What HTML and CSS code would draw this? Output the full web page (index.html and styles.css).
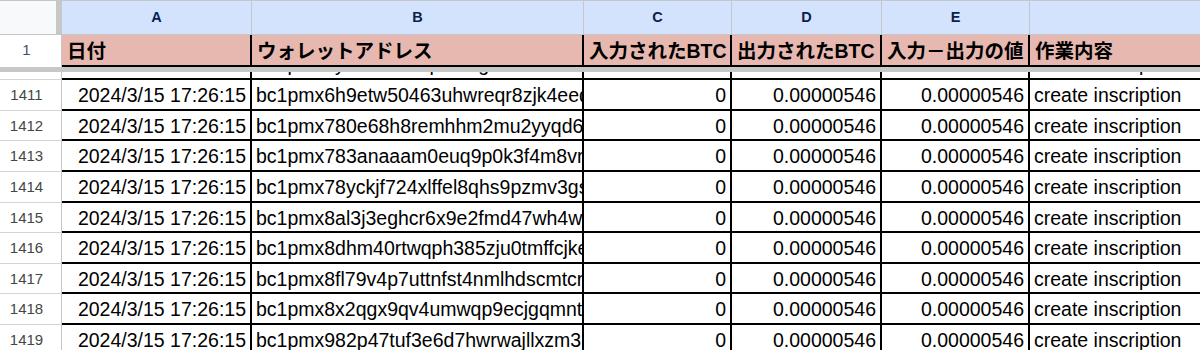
FILE: index.html
```html
<!DOCTYPE html>
<html lang="ja">
<head>
<meta charset="utf-8">
<title>Sheet</title>
<link rel="stylesheet" href="styles.css">
</head>
<body>
<div class="sheet">
  <div class="grid colheads">
    <div class="corner"></div>
    <div class="colhead">A</div>
    <div class="colhead">B</div>
    <div class="colhead">C</div>
    <div class="colhead">D</div>
    <div class="colhead">E</div>
    <div class="colhead"></div>
  </div>
  <div class="grid hdr-row">
    <div class="rn rn-sel">1</div>
    <div class="hcell">日付</div>
    <div class="hcell">ウォレットアドレス</div>
    <div class="hcell">入力されたBTC</div>
    <div class="hcell">出力されたBTC</div>
    <div class="hcell">入力－出力の値</div>
    <div class="hcell">作業内容</div>
  </div>
  <div class="freeze"></div>
  <div class="viewport">
    <div class="rows">
      <div class="grid drow">
        <div class="rn">1410</div>
        <div class="cell num">2024/3/15 17:26:15</div>
        <div class="cell">bc1pmx6yh9etw50ap3urkg8zt4eed0mrt</div>
        <div class="cell num">0</div>
        <div class="cell num">0.00000546</div>
        <div class="cell num">0.00000546</div>
        <div class="cell">create inscription</div>
      </div>
      <div class="grid drow">
        <div class="rn">1411</div>
        <div class="cell num">2024/3/15 17:26:15</div>
        <div class="cell">bc1pmx6h9etw50463uhwreqr8zjk4eeq9xl2</div>
        <div class="cell num">0</div>
        <div class="cell num">0.00000546</div>
        <div class="cell num">0.00000546</div>
        <div class="cell">create inscription</div>
      </div>
      <div class="grid drow">
        <div class="rn">1412</div>
        <div class="cell num">2024/3/15 17:26:15</div>
        <div class="cell">bc1pmx780e68h8remhhm2mu2yyqd6z7k0</div>
        <div class="cell num">0</div>
        <div class="cell num">0.00000546</div>
        <div class="cell num">0.00000546</div>
        <div class="cell">create inscription</div>
      </div>
      <div class="grid drow">
        <div class="rn">1413</div>
        <div class="cell num">2024/3/15 17:26:15</div>
        <div class="cell">bc1pmx783anaaam0euq9p0k3f4m8vrx2d</div>
        <div class="cell num">0</div>
        <div class="cell num">0.00000546</div>
        <div class="cell num">0.00000546</div>
        <div class="cell">create inscription</div>
      </div>
      <div class="grid drow">
        <div class="rn">1414</div>
        <div class="cell num">2024/3/15 17:26:15</div>
        <div class="cell">bc1pmx78yckjf724xlffel8qhs9pzmv3gs2</div>
        <div class="cell num">0</div>
        <div class="cell num">0.00000546</div>
        <div class="cell num">0.00000546</div>
        <div class="cell">create inscription</div>
      </div>
      <div class="grid drow">
        <div class="rn">1415</div>
        <div class="cell num">2024/3/15 17:26:15</div>
        <div class="cell">bc1pmx8al3j3eghcr6x9e2fmd47wh4wk3s</div>
        <div class="cell num">0</div>
        <div class="cell num">0.00000546</div>
        <div class="cell num">0.00000546</div>
        <div class="cell">create inscription</div>
      </div>
      <div class="grid drow">
        <div class="rn">1416</div>
        <div class="cell num">2024/3/15 17:26:15</div>
        <div class="cell">bc1pmx8dhm40rtwqph385zju0tmffcjke4q</div>
        <div class="cell num">0</div>
        <div class="cell num">0.00000546</div>
        <div class="cell num">0.00000546</div>
        <div class="cell">create inscription</div>
      </div>
      <div class="grid drow">
        <div class="rn">1417</div>
        <div class="cell num">2024/3/15 17:26:15</div>
        <div class="cell">bc1pmx8fl79v4p7uttnfst4nmlhdscmtcrx</div>
        <div class="cell num">0</div>
        <div class="cell num">0.00000546</div>
        <div class="cell num">0.00000546</div>
        <div class="cell">create inscription</div>
      </div>
      <div class="grid drow">
        <div class="rn">1418</div>
        <div class="cell num">2024/3/15 17:26:15</div>
        <div class="cell">bc1pmx8x2qgx9qv4umwqp9ecjgqmntw5z</div>
        <div class="cell num">0</div>
        <div class="cell num">0.00000546</div>
        <div class="cell num">0.00000546</div>
        <div class="cell">create inscription</div>
      </div>
      <div class="grid drow">
        <div class="rn">1419</div>
        <div class="cell num">2024/3/15 17:26:15</div>
        <div class="cell">bc1pmx982p47tuf3e6d7hwrwajllxzm3k8</div>
        <div class="cell num">0</div>
        <div class="cell num">0.00000546</div>
        <div class="cell num">0.00000546</div>
        <div class="cell">create inscription</div>
      </div>
    </div>
  </div>
</div>
</body>
</html>
```

FILE: styles.css
```css
* {
  box-sizing: border-box;
}

html,
body {
  margin: 0;
  padding: 0;
}

body {
  width: 1200px;
  height: 350px;
  overflow: hidden;
  background: #ffffff;
  font-family: "Liberation Sans", Arial, "Noto Sans CJK JP", sans-serif;
  color: #000000;
}

.sheet {
  display: flex;
  flex-direction: column;
  width: 1200px;
  height: 350px;
  overflow: hidden;
}

.grid {
  display: grid;
  grid-template-columns: 62px 190px 332px 148px 150px 148px 200px;
  flex: none;
}

/* column letters */
.colheads {
  height: 35px;
  border-top: 1px solid #c4c7c5;
  border-bottom: 1px solid #c4c7c5;
}

.corner {
  background: #f8f9fa;
  border-right: 6px solid #c7c7c7;
}

.colhead {
  background: #d3e3fd;
  border-right: 1px solid #c4c7c5;
  text-align: center;
  font-family: "Liberation Sans", Arial, sans-serif;
  font-weight: bold;
  font-size: 14.5px;
  line-height: 33px;
  color: #0a1f4d;
}

/* row numbers */
.rn {
  border-right: 1px solid #c4c7c5;
  border-bottom: 1px solid #d3d5d6;
  text-align: center;
  padding-right: 8px;
  font-family: "Liberation Sans", Arial, sans-serif;
  font-size: 15px;
  color: #444746;
  background: #ffffff;
}

.rn-sel {
  color: #3f506e;
}

/* header row 1 */
.hdr-row {
  height: 32px;
}

.hdr-row .rn {
  border-bottom: none;
  line-height: 30px;
}

.hcell {
  background: #e6b8af;
  border-right: 2px solid #000000;
  border-bottom: 2px solid #000000;
  font-weight: bold;
  font-size: 19.5px;
  line-height: 28px;
  padding: 2px 4px 0 5px;
  overflow: hidden;
  white-space: nowrap;
}

.freeze {
  flex: none;
  height: 5px;
  background: #c7c7c7;
}

/* scrolled data */
.viewport {
  flex: 1;
  overflow: hidden;
}

.rows {
  margin-top: -22.625px;
}

.drow {
  height: 30.625px;
}

.drow .rn {
  line-height: 29px;
}

.cell {
  border-right: 2px solid #000000;
  border-bottom: 2px solid #000000;
  font-size: 19.5px;
  line-height: 28px;
  padding: 1px 4px 0 4px;
  overflow: hidden;
  white-space: nowrap;
}

.num {
  text-align: right;
}
```
